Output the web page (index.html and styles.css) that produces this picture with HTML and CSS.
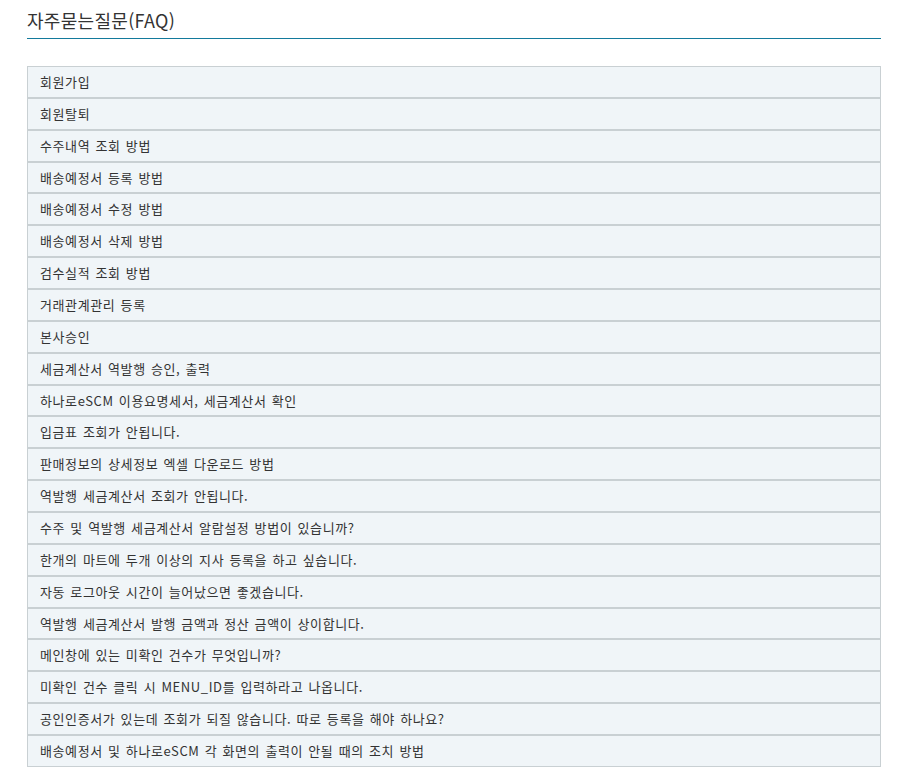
FILE: index.html
```html
<!DOCTYPE html>
<html lang="ko">
<head>
    <meta charset="UTF-8">
    <title>자주묻는질문(FAQ)</title>
    <link rel="stylesheet" href="styles.css">
</head>
<body>

<div class="faq">
    <h2 class="faq-title">자주묻는질문(FAQ)</h2>

    <ul class="faq-list">
        <li>회원가입</li>
        <li>회원탈퇴</li>
        <li>수주내역 조회 방법</li>
        <li>배송예정서 등록 방법</li>
        <li>배송예정서 수정 방법</li>
        <li>배송예정서 삭제 방법</li>
        <li>검수실적 조회 방법</li>
        <li>거래관계관리 등록</li>
        <li>본사승인</li>
        <li>세금계산서 역발행 승인, 출력</li>
        <li>하나로eSCM 이용요명세서, 세금계산서 확인</li>
        <li>입금표 조회가 안됩니다.</li>
        <li>판매정보의 상세정보 엑셀 다운로드 방법</li>
        <li>역발행 세금계산서 조회가 안됩니다.</li>
        <li>수주 및 역발행 세금계산서 알람설정 방법이 있습니까?</li>
        <li>한개의 마트에 두개 이상의 지사 등록을 하고 싶습니다.</li>
        <li>자동 로그아웃 시간이 늘어났으면 좋겠습니다.</li>
        <li>역발행 세금계산서 발행 금액과 정산 금액이 상이합니다.</li>
        <li>메인창에 있는 미확인 건수가 무엇입니까?</li>
        <li>미확인 건수 클릭 시 MENU_ID를 입력하라고 나옵니다.</li>
        <li>공인인증서가 있는데 조회가 되질 않습니다. 따로 등록을 해야 하나요?</li>
        <li>배송예정서 및 하나로eSCM 각 화면의 출력이 안될 때의 조치 방법</li>
    </ul>
</div>

</body>
</html>
```

FILE: styles.css
```css
body {
    margin: 0;
    padding: 0;
    font-family: "Noto Sans CJK KR", "Noto Sans", sans-serif;
    color: #333;
    background: #fff;
}

.faq {
    width: 854px;
    margin-left: 27px;
}

.faq-title {
    margin: 0;
    padding-top: 8px;
    height: 30px;
    line-height: 24px;
    font-size: 18px;
    letter-spacing: 0.3px;
    font-weight: normal;
    color: #333;
    border-bottom: 1px solid #137a9c;
}

.faq-list {
    list-style: none;
    margin: 27px 0 0 0;
    padding: 0;
}

.faq-list li {
    height: 29.86px;
    line-height: 29px;
    padding: 0 12px;
    font-size: 13px;
    letter-spacing: 0.6px;
    word-spacing: 1px;
    color: #333;
    background-color: #f0f5f8;
    border: 1px solid #c9d0d3;
    cursor: pointer;
}
```
